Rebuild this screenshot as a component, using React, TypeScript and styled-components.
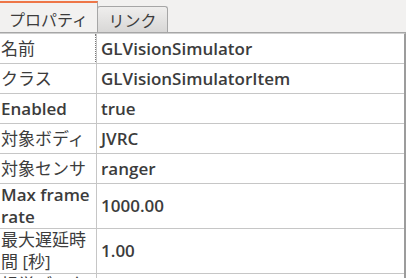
import React from 'react'
import styled, { createGlobalStyle } from 'styled-components'

const GlobalStyle = createGlobalStyle`
	html, body {
		margin: 0;
		padding: 0;
		background: #f2f1f0;
	}
`

type Property = { label: string; value: string; lines?: number }

const properties: Property[] = [
	{ label: '名前', value: 'GLVisionSimulator' },
	{ label: 'クラス', value: 'GLVisionSimulatorItem' },
	{ label: 'Enabled', value: 'true' },
	{ label: '対象ボディ', value: 'JVRC' },
	{ label: '対象センサ', value: 'ranger' },
	{ label: 'Max frame rate', value: '1000.00', lines: 2 },
	{ label: '最大遅延時間 [秒]', value: '1.00', lines: 2 },
	{ label: '視覚データの記録', value: 'true', lines: 2 },
]

/** Japanese glyphs are drawn by the fallback font at regular weight */
function LabelText({ text }: { text: string }) {
	const runs = text.match(/[\u3000-\u9fff\uff00-\uffef]+(?:\s*\[[^\]]*\])?|[^\u3000-\u9fff\uff00-\uffef]+/g) ?? []
	return (
		<>
			{runs.map((run, n) =>
				/[\u3000-\u9fff]/.test(run)
					? <Ja key={'run' + n}>{run}</Ja>
					: <React.Fragment key={'run' + n}>{run}</React.Fragment>
			)}
		</>
	)
}

function App() {
	return (
		<Frame>
			<GlobalStyle />
			<TabBar>
				<Tab $active>プロパティ</Tab>
				<Tab>リンク</Tab>
			</TabBar>
			<Table>
				{properties.map((p, i) => (
					<Row key={p.label} $lines={p.lines ?? 1}>
						<Label $focused={i === 0}>
							<span><LabelText text={p.label} /></span>
						</Label>
						<Value>{p.value}</Value>
					</Row>
				))}
			</Table>
		</Frame>
	)
}

export default App

//#region styles
const Frame = styled.div`
	width: 406px;
	height: 278px;
	overflow: hidden;
	display: flex;
	flex-direction: column;
	background: #f2f1f0;
	font-family: "Open Sans", "Noto Sans CJK JP", sans-serif;
	color: #3c3c3c;
`

const TabBar = styled.div`
	display: flex;
	align-items: flex-end;
	height: 32px;
	flex-shrink: 0;
	border-bottom: 1px solid #a6a6a6;
`

const Tab = styled.div<{ $active?: boolean }>`
	box-sizing: border-box;
	display: flex;
	align-items: center;
	justify-content: center;
	font-family: "Noto Sans CJK JP", sans-serif;
	font-size: 16px;
	color: #3c3c3c;
	width: ${p => (p.$active ? '98px' : '71px')};
	height: ${p => (p.$active ? '31px' : '26px')};
	padding-top: ${p => (p.$active ? '3px' : '1px')};
	margin-left: ${p => (p.$active ? '0' : '-1px')};
	background: ${p => (p.$active ? '#f2f1f0' : 'linear-gradient(#efeeed, #d8d7d6)')};
	border: 1px solid #a6a6a6;
	border-bottom: none;
	border-left-width: ${p => (p.$active ? '0' : '1px')};
	border-top: ${p => (p.$active ? '2px solid #ee7647' : '1px solid #a6a6a6')};
	border-radius: ${p => (p.$active ? '0' : '3px 3px 0 0')};
`

const Table = styled.div`
	flex: 1;
	background: #ffffff;
	border-top: 1px solid #d0d0d0;
	border-right: 2px solid #9c9c9c;
`

const Row = styled.div<{ $lines: number }>`
	display: grid;
	grid-template-columns: 97px 1fr;
	height: ${p => (p.$lines > 1 ? 44 : 29)}px;
	border-bottom: 1px solid #c6c6c6;
	font-size: 17px;
	font-weight: 600;
	line-height: 22px;
`

const Label = styled.div<{ $focused?: boolean }>`
	position: relative;
	display: flex;
	align-items: center;
	padding-left: 1px;
	border-right: 1px solid #c6c6c6;
	overflow: hidden;

	&::after {
		content: "";
		display: ${p => (p.$focused ? 'block' : 'none')};
		position: absolute;
		inset: 0 0 -1px 0;
		border-right: 1px dotted #7a7a7a;
		border-bottom: 1px dotted #7a7a7a;
	}
`

const Ja = styled.span`
	font-weight: 400;
`

const Value = styled.div`
	display: flex;
	align-items: center;
	padding-left: 4px;
	white-space: nowrap;
	overflow: hidden;
`
//#endregion
